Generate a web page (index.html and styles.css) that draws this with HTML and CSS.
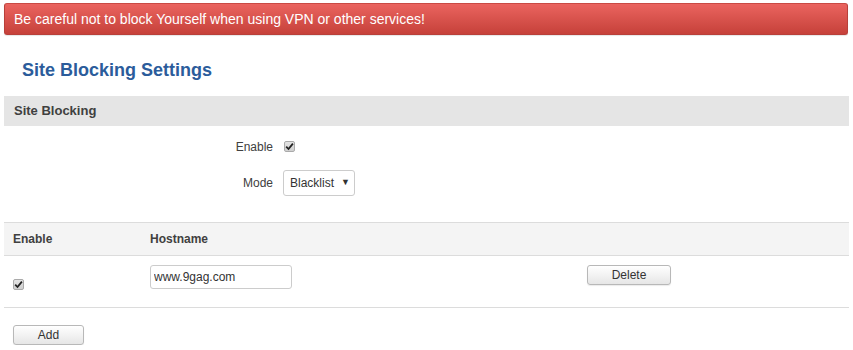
FILE: index.html
```html
<!DOCTYPE html>
<html lang="en">
<head>
  <meta charset="UTF-8">
  <meta name="viewport" content="width=device-width, initial-scale=1.0">
  <title>Site Blocking Settings</title>
  <link rel="stylesheet" href="styles.css">
</head>
<body>
  <div class="page">
    <div class="alert">Be careful not to block Yourself when using VPN or other services!</div>

    <h2 class="title">Site Blocking Settings</h2>

    <div class="section">
      <h3 class="section-head">Site Blocking</h3>
      <div class="form">
        <div class="form-row">
          <label class="form-label">Enable</label>
          <div class="form-field">
            <span class="check">
              <svg width="9" height="9" viewBox="0 0 9 9"><path d="M1.2 4.6 L3.5 7 L7.9 1.6" fill="none" stroke="#222" stroke-width="1.8"/></svg>
            </span>
          </div>
        </div>
        <div class="form-row">
          <label class="form-label">Mode</label>
          <div class="form-field">
            <div class="select-wrap">
              <select class="select">
                <option>Blacklist</option>
                <option>Whitelist</option>
              </select>
              <span class="select-arrow">&#9660;</span>
            </div>
          </div>
        </div>
      </div>
    </div>

    <table class="sites">
      <thead>
        <tr>
          <th class="col-enable">Enable</th>
          <th class="col-host">Hostname</th>
          <th></th>
        </tr>
      </thead>
      <tbody>
        <tr>
          <td class="cell-check">
            <span class="check">
              <svg width="9" height="9" viewBox="0 0 9 9"><path d="M1.2 4.6 L3.5 7 L7.9 1.6" fill="none" stroke="#222" stroke-width="1.8"/></svg>
            </span>
          </td>
          <td><input class="text-input" type="text" value="www.9gag.com"></td>
          <td><button class="btn btn-delete">Delete</button></td>
        </tr>
      </tbody>
    </table>

    <div class="actions">
      <button class="btn btn-add">Add</button>
    </div>
  </div>
</body>
</html>
```

FILE: styles.css
```css
body {
  font-family: "Liberation Sans", Arial, sans-serif;
  font-size: 12px;
  color: #404040;
  background-color: #fff;
  margin: 0;
}
.page {
  padding: 3px 4px 0 4px;
}
.alert {
  height: 32px;
  line-height: 31px;
  padding-left: 9px;
  box-sizing: border-box;
  font-size: 14px;
  color: #fff;
  background: linear-gradient(to bottom, #ea645f, #c6413a);
  border: 1px solid #b8403a;
  border-top-color: #c94a44;
  border-radius: 3px;
  box-shadow: 0 1px 1px rgba(0, 0, 0, 0.1);
  margin-right: 1px;
}
.title {
  font-size: 18px;
  font-weight: bold;
  color: #2b5c9b;
  margin: 24px 0 0 18px;
  line-height: 22px;
}
.section {
  margin-top: 15px;
}
.section-head {
  background-color: #e5e5e5;
  height: 30px;
  line-height: 30px;
  font-size: 13px;
  font-weight: bold;
  color: #404040;
  margin: 0;
  padding-left: 10px;
}
.form {
  padding-top: 13px;
}
.form-row {
  display: grid;
  grid-template-columns: 269px 1fr;
  column-gap: 10px;
  align-items: center;
}
.form-row + .form-row {
  margin-top: 15px;
}
.form-label {
  text-align: right;
}
.form-row:first-child {
  height: 16px;
}
.check {
  display: inline-flex;
  align-items: center;
  justify-content: center;
  width: 11px;
  height: 11px;
  box-sizing: border-box;
  border: 1px solid #aaa;
  border-radius: 2px;
  background: linear-gradient(to bottom, #e4e4e4, #cfcfcf);
  margin-left: 1px;
}
.select-wrap {
  position: relative;
  display: inline-block;
}
.select {
  appearance: none;
  -webkit-appearance: none;
  width: 72px;
  height: 26px;
  font-family: inherit;
  font-size: 12px;
  color: #333;
  background-color: #fff;
  border: 1px solid #ccc;
  border-radius: 3px;
  padding: 0 0 0 6px;
  margin: 0;
}
.select-arrow {
  position: absolute;
  right: 5px;
  top: 7px;
  font-size: 9px;
  color: #333;
  pointer-events: none;
}
.sites {
  width: 100%;
  border-collapse: collapse;
  margin-top: 26px;
}
.sites th {
  background-color: #f4f4f4;
  border-top: 1px solid #dcdcdc;
  border-bottom: 1px solid #dcdcdc;
  height: 32px;
  text-align: left;
  font-weight: bold;
  color: #404040;
  padding: 0 0 0 9px;
}
.sites td {
  border-bottom: 1px solid #dcdcdc;
  padding: 9px 0 15px 9px;
  vertical-align: top;
}
.sites .col-enable {
  width: 128px;
}
.sites .col-host {
  width: 428px;
}
.sites td.cell-check {
  padding-top: 22px;
}
.sites td.cell-check .check {
  margin-left: 0;
}
.text-input {
  width: 142px;
  height: 24px;
  box-sizing: border-box;
  font-family: inherit;
  font-size: 12px;
  color: #333;
  border: 1px solid #ccc;
  border-radius: 3px;
  padding: 0 3px;
  margin: 0;
}
.btn {
  font-family: inherit;
  font-size: 12px;
  color: #333;
  height: 20px;
  padding: 0;
  background: linear-gradient(to bottom, #ffffff, #e6e6e6);
  border: 1px solid #b8b8b8;
  border-radius: 3px;
  box-shadow: 0 1px 1px rgba(0, 0, 0, 0.08);
  cursor: pointer;
}
.btn-delete {
  width: 84px;
}
.btn-add {
  width: 71px;
}
.actions {
  padding: 17px 0 0 9px;
}
```
